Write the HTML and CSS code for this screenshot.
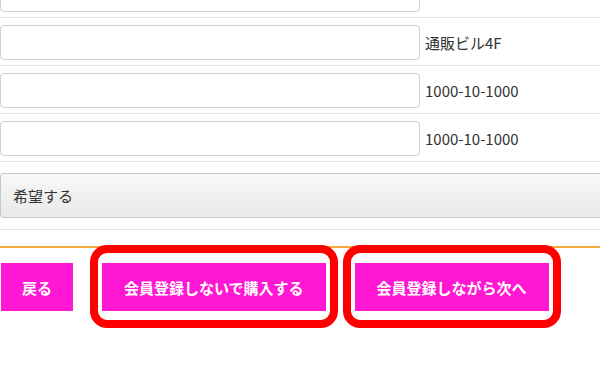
FILE: index.html
```html
<!DOCTYPE html>
<html lang="ja">
<head>
<meta charset="utf-8">
<title>注文フォーム</title>
<link rel="stylesheet" href="styles.css">
</head>
<body>
<div class="form">
  <div class="row row-first">
    <div class="field"></div>
  </div>
  <div class="row">
    <div class="field"></div>
    <span class="note">通販ビル4F</span>
  </div>
  <div class="row">
    <div class="field"></div>
    <span class="note">1000-10-1000</span>
  </div>
  <div class="row">
    <div class="field"></div>
    <span class="note">1000-10-1000</span>
  </div>
  <div class="row row-select">
    <div class="select">希望する</div>
  </div>
</div>
<div class="rule"></div>
<div class="actions">
  <a class="btn">戻る</a>
  <a class="btn btn-marked">会員登録しないで購入する</a>
  <a class="btn btn-marked">会員登録しながら次へ</a>
</div>
</body>
</html>
```
FILE: styles.css
```css
html {
  overflow: hidden;
  background: #fff;
}
body {
  margin: 0;
  padding: 0;
  font-family: "Noto Sans CJK JP", "Noto Sans", sans-serif;
  color: #333;
  width: 600px;
  min-height: 381px;
}
.form {
  margin-top: -23px;
}
.row {
  display: flex;
  align-items: center;
  border-top: 1px solid #e2e2e2;
  padding: 7px 0 5px;
}
.row-first {
  border-top: none;
  padding-top: 0;
}
.field {
  width: 420px;
  height: 35px;
  box-sizing: border-box;
  border: 1px solid #cfcfcf;
  border-radius: 4px;
  background: #fff;
  flex: none;
}
.note {
  margin-left: 5px;
  font-size: 15px;
  color: #333;
  white-space: nowrap;
}
.row-select {
  padding: 11px 0 11px;
  border-bottom: 1px solid #e2e2e2;
}
.select {
  width: 604px;
  height: 45px;
  box-sizing: border-box;
  margin-right: -4px;
  border: 1px solid #c8c8c8;
  border-radius: 3px;
  background: linear-gradient(#f8f8f8, #e9e9e9);
  display: flex;
  align-items: center;
  padding-left: 12px;
  font-size: 15px;
  color: #333;
  flex: none;
}
.rule {
  margin-top: 16px;
  height: 2px;
  background: #f3a93c;
}
.actions {
  display: flex;
  gap: 29px;
  padding: 15px 0 0 1px;
}
.btn {
  position: relative;
  display: flex;
  align-items: center;
  justify-content: center;
  height: 48px;
  padding: 0 22px;
  background: #ff17d3;
  color: #fff;
  font-weight: bold;
  font-size: 15px;
  white-space: nowrap;
}
.btn:first-child {
  padding: 0 21px;
}
.btn-marked::after {
  content: "";
  position: absolute;
  top: -18px;
  bottom: -17px;
  left: -12px;
  right: -12px;
  border: 8px solid #ff0000;
  border-radius: 17px;
}
```
